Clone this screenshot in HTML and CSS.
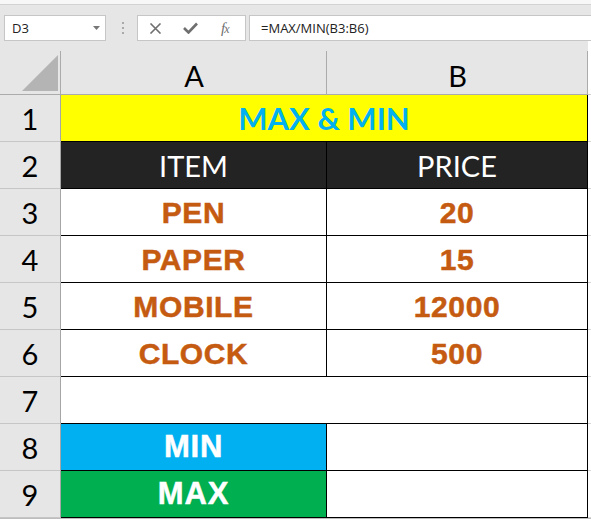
FILE: index.html
```html
<!DOCTYPE html>
<html>
<head>
<meta charset="utf-8">
<link rel="stylesheet" href="styles.css">
</head>
<body>
<div class="top"></div>
<div class="fbar">
  <div class="namebox"><span>D3</span><svg class="dd" width="7" height="4" viewBox="0 0 7 4"><path d="M0 0H7L3.5 4Z" fill="#777"/></svg></div>
  <div class="grip"><i></i><i></i><i></i></div>
  <div class="btns">
    <svg class="ic-x" width="13" height="11" viewBox="0 0 13 11"><path d="M1.5 0.5L11.5 10.5M11.5 0.5L1.5 10.5" stroke="#6f6f6f" stroke-width="1.6" fill="none"/></svg>
    <svg class="ic-ok" width="15" height="12" viewBox="0 0 15 12"><path d="M1 6L5.5 10.5L14 1.5" stroke="#6f6f6f" stroke-width="2.6" fill="none"/></svg>
    <span class="fx">f<small>x</small></span>
  </div>
  <div class="formula">=MAX/MIN(B3:B6)</div>
</div>
<div class="sheet">
  <div class="hd corner"><svg width="36" height="36" viewBox="0 0 36 36"><path d="M36 0V36H0Z" fill="#b4b4b4"/></svg></div>
  <div class="hd">A</div>
  <div class="hd">B</div>
  <div class="hd extra"></div>

  <div class="rh">1</div>
  <div class="c wide yellow">MAX &amp; MIN</div>
  <div class="x"></div>

  <div class="rh">2</div>
  <div class="c dark">ITEM</div>
  <div class="c dark">PRICE</div>
  <div class="x"></div>

  <div class="rh">3</div>
  <div class="c org">PEN</div>
  <div class="c org">20</div>
  <div class="x"></div>

  <div class="rh">4</div>
  <div class="c org">PAPER</div>
  <div class="c org">15</div>
  <div class="x"></div>

  <div class="rh">5</div>
  <div class="c org">MOBILE</div>
  <div class="c org">12000</div>
  <div class="x"></div>

  <div class="rh">6</div>
  <div class="c org">CLOCK</div>
  <div class="c org">500</div>
  <div class="x"></div>

  <div class="rh">7</div>
  <div class="c wide"></div>
  <div class="x"></div>

  <div class="rh">8</div>
  <div class="c blue">MIN</div>
  <div class="c"></div>
  <div class="x"></div>

  <div class="rh">9</div>
  <div class="c green">MAX</div>
  <div class="c"></div>
  <div class="x"></div>
</div>
<div class="foot"></div>
</body>
</html>
```

FILE: styles.css
```css
html, body {
  margin: 0;
  padding: 0;
}
body {
  width: 591px;
  height: 519px;
  overflow: hidden;
  background: #ffffff;
  font-family: "Lato", "Liberation Sans", sans-serif;
}
.top {
  height: 4px;
  background: #f7f7f7;
  border-bottom: 1px solid #d2d2d2;
}
.fbar {
  display: flex;
  align-items: flex-start;
  height: 36px;
  box-sizing: border-box;
  padding: 10px 0 0 4px;
  background: #e6e6e6;
}
.namebox {
  flex: none;
  width: 102px;
  height: 26px;
  box-sizing: border-box;
  border: 1px solid #c6c6c6;
  background: #fff;
  display: flex;
  align-items: center;
  justify-content: space-between;
  padding: 0 5px 0 7px;
  font: 13px "Open Sans", sans-serif;
  color: #222;
}
.dd {
  display: block;
}
.grip {
  flex: none;
  margin-left: 15px;
  width: 3px;
  height: 26px;
  display: flex;
  flex-direction: column;
  align-items: center;
  justify-content: center;
  gap: 3px;
}
.grip i {
  display: block;
  width: 2px;
  height: 2px;
  background: #a9a9a9;
}
.btns {
  flex: none;
  margin-left: 13px;
  width: 109px;
  height: 26px;
  box-sizing: border-box;
  border: 1px solid #c6c6c6;
  background: #fff;
  display: flex;
  align-items: center;
  padding-left: 11px;
}
.ic-x {
  display: block;
}
.ic-ok {
  display: block;
  margin-left: 21px;
}
.fx {
  margin-left: 23px;
  font: italic 15px "Liberation Serif", serif;
  color: #6f6f6f;
  letter-spacing: -1px;
}
.fx small {
  font-size: 12px;
}
.formula {
  flex: 1;
  min-width: 0;
  margin-left: 3px;
  height: 26px;
  box-sizing: border-box;
  border: 1px solid #c6c6c6;
  border-right: none;
  background: #fff;
  padding-left: 11px;
  font: 13px "Open Sans", sans-serif;
  line-height: 24px;
  color: #222;
  white-space: nowrap;
}
.sheet {
  display: grid;
  grid-template-columns: 61px 266px 261px 1fr;
  grid-template-rows: 54px repeat(9, 47px);
}
.hd {
  box-sizing: border-box;
  border-bottom: 1px solid #ababab;
  background: linear-gradient(#ababab, #ababab) right bottom / 1px calc(100% - 10px) no-repeat, #e6e6e6;
  display: flex;
  align-items: center;
  justify-content: center;
  padding-top: 15px;
  font-size: 29px;
  color: #000;
}
.corner {
  align-items: flex-start;
  justify-content: flex-start;
  padding: 14px 0 0 22px;
}
.corner svg {
  display: block;
}
.hd.extra {
  background: #ffffff;
  border-bottom: 1px solid #d0d0d0;
}
.rh {
  box-sizing: border-box;
  background: #e6e6e6;
  border-right: 1px solid #a6a6a6;
  border-bottom: 1px solid #c6c6c6;
  display: flex;
  align-items: center;
  justify-content: center;
  font-size: 29px;
  color: #000;
}
.c {
  box-sizing: border-box;
  border-right: 1px solid #000;
  border-bottom: 1px solid #000;
  background: #fff;
  display: flex;
  align-items: center;
  justify-content: center;
}
.x {
  background: #fff;
  border-bottom: 1px solid #d4d4d4;
}
.wide {
  grid-column: span 2;
}
.yellow {
  background: #ffff00;
  color: #00b0f0;
  font-weight: 700;
  font-size: 31px;
}
.dark {
  background: #232323;
  color: #fff;
  font-size: 29px;
}
.org {
  color: #c55a11;
  font: 700 30px "Liberation Sans", Arial, sans-serif;
  letter-spacing: 0.6px;
  -webkit-text-stroke: 0.5px #c55a11;
  padding-top: 1px;
}
.blue {
  background: #00b0f0;
  color: #fff;
  font: 700 31px "Liberation Sans", Arial, sans-serif;
  letter-spacing: 0.8px;
  -webkit-text-stroke: 0.5px #fff;
}
.green {
  background: #00b050;
  color: #fff;
  font: 700 31px "Liberation Sans", Arial, sans-serif;
  letter-spacing: 0.8px;
  -webkit-text-stroke: 0.5px #fff;
}
.foot {
  height: 1px;
  background: #bdbdbd;
}
```
